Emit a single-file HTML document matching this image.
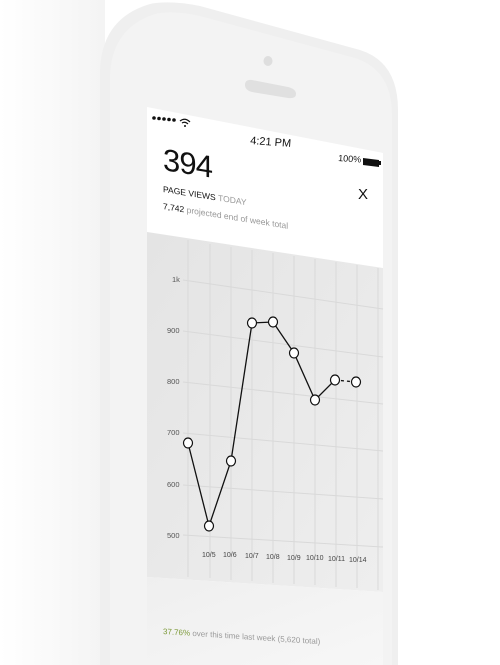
<!DOCTYPE html>
<html><head><meta charset="utf-8"><style>
html,body{margin:0;padding:0;background:#fff;}
svg{display:block}
text{font-family:"Liberation Sans",sans-serif}
</style></head><body>
<svg width="500" height="665" viewBox="0 0 500 665">
<defs>
<linearGradient id="bg" x1="0" x2="1" y1="0" y2="0">
<stop offset="0" stop-color="#fff"/><stop offset="0.5" stop-color="#f7f7f7"/><stop offset="1" stop-color="#efefef"/>
</linearGradient>
<linearGradient id="chart" x1="0" x2="1" y1="0" y2="1">
<stop offset="0" stop-color="#e4e4e4"/><stop offset="1" stop-color="#eeeeee"/>
</linearGradient>
<linearGradient id="low" x1="0" x2="1" y1="0" y2="1">
<stop offset="0" stop-color="#efefef"/><stop offset="1" stop-color="#f7f7f7"/>
</linearGradient>
</defs>
<rect width="500" height="665" fill="#fff"/>
<rect x="0" y="0" width="105" height="665" fill="url(#bg)" opacity="0.7"/>
<!-- phone outer -->
<path d="M100,665 L100,70 Q102,18 150,4 Q170,0 200,6 L360,50 Q398,62 398,110 L398,665 Z" fill="#efefef"/>
<path d="M110,665 L110,75 Q112,28 155,14 Q172,10 200,16 L355,58 Q392,70 392,115 L392,665 Z" fill="#f3f3f3"/>
<!-- camera & speaker -->
<ellipse cx="268" cy="61" rx="4.5" ry="5" fill="#dedede"/>
<path d="M252,80 L288,87 Q296,89 296,94 Q296,99 288,98 L252,92 Q245,90 245,85 Q245,79 252,80 Z" fill="#e0e0e0"/>
<!-- screen -->
<polygon points="147,107 383,153 383,665 147,665" fill="#fff"/>
<polygon points="147,232 383,268 383,592 147,577" fill="url(#chart)"/>
<polygon points="147,577 383,592 383,665 147,665" fill="url(#low)"/>
<!-- status -->
<g fill="#111">
<circle cx="154" cy="118" r="1.8"/><circle cx="159" cy="118.5" r="1.8"/><circle cx="164" cy="119" r="1.8"/><circle cx="169" cy="119.5" r="1.8"/><circle cx="174" cy="120" r="1.8"/>
</g>
<path d="M180,121 Q185,117 190,122 M182,123 Q185,121 188,124" stroke="#111" stroke-width="1.2" fill="none"/>
<circle cx="185" cy="126" r="1" fill="#111"/>
<text x="250" y="144" font-size="11" fill="#111" transform="rotate(4 250 144)">4:21 PM</text>
<text x="338" y="161" font-size="9" fill="#111" transform="rotate(4 338 161)">100%</text>
<polygon points="363,158 379,160 379,167 363,165" fill="#111"/>
<rect x="379" y="161" width="2" height="4" fill="#111"/>
<!-- header text -->
<g transform="translate(163,170) skewY(9)">
<text x="0" y="0" font-size="31" fill="#111" font-weight="300" textLength="50">394</text>
<text x="0" y="22" font-size="8.5" fill="#111">PAGE VIEWS <tspan fill="#999">TODAY</tspan></text>
<text x="0" y="39" font-size="8.5" fill="#111">7,742 <tspan fill="#999">projected end of week total</tspan></text>
</g>
<text x="358" y="199" font-size="15" fill="#111">X</text>
<!-- grid -->
<g stroke="#d9d9d9" stroke-width="1">
<line x1="188" y1="240" x2="188" y2="577"/><line x1="210" y1="244" x2="210" y2="578"/><line x1="231" y1="247" x2="231" y2="580"/><line x1="252" y1="250" x2="252" y2="581"/><line x1="273" y1="253" x2="273" y2="583"/><line x1="294" y1="256" x2="294" y2="584"/><line x1="315" y1="259" x2="315" y2="585"/><line x1="336" y1="262" x2="336" y2="587"/><line x1="357" y1="265" x2="357" y2="588"/><line x1="378" y1="268" x2="378" y2="590"/>
<line x1="183" y1="280" x2="383" y2="309"/>
<line x1="183" y1="331" x2="383" y2="357"/>
<line x1="183" y1="382" x2="383" y2="404"/>
<line x1="183" y1="433" x2="383" y2="451"/>
<line x1="183" y1="485" x2="383" y2="499"/>
<line x1="183" y1="535" x2="383" y2="547"/>
</g>
<g font-size="7.5" fill="#555">
<text x="172" y="282">1k</text><text x="167" y="333">900</text><text x="167" y="384">800</text><text x="167" y="435">700</text><text x="167" y="487">600</text><text x="167" y="538">500</text>
</g>
<g font-size="7" fill="#444">
<text x="202" y="557">10/5</text><text x="223" y="557">10/6</text><text x="245" y="558">10/7</text><text x="266" y="559">10/8</text><text x="287" y="560">10/9</text><text x="306" y="560">10/10</text><text x="328" y="561">10/11</text><text x="349" y="562">10/14</text>
</g>
<polyline points="188,443 209,526 231,461 252,323 273,322 294,353 315,400 335,380" fill="none" stroke="#111" stroke-width="1.3"/>
<line x1="335" y1="380" x2="356" y2="382" stroke="#111" stroke-width="1.3" stroke-dasharray="3,3"/>
<g fill="#fff" stroke="#111" stroke-width="1.2">
<ellipse cx="188" cy="443" rx="4.5" ry="5"/><ellipse cx="209" cy="526" rx="4.5" ry="5"/><ellipse cx="231" cy="461" rx="4.5" ry="5"/><ellipse cx="252" cy="323" rx="4.5" ry="5"/><ellipse cx="273" cy="322" rx="4.5" ry="5"/><ellipse cx="294" cy="353" rx="4.5" ry="5"/><ellipse cx="315" cy="400" rx="4.5" ry="5"/><ellipse cx="335" cy="380" rx="4.5" ry="5"/><ellipse cx="356" cy="382" rx="4.5" ry="5"/>
</g>
<g transform="translate(163,634) skewY(3.7)">
<text x="0" y="0" font-size="8" fill="#999"><tspan fill="#7d9a3a">37.76%</tspan> over this time last week (5,620 total)</text>
</g>
</svg>
</body></html>
